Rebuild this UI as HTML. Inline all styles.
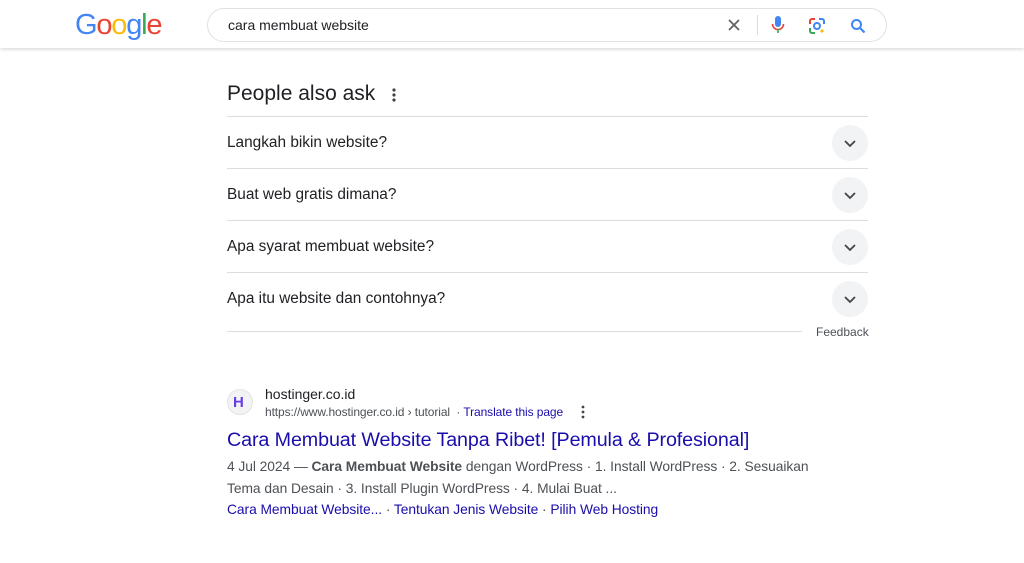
<!DOCTYPE html>
<html><head><style>
body{margin:0;width:1024px;height:563px;background:#fff;font-family:"Liberation Sans",Arial,sans-serif;position:relative;overflow:hidden}
.hdr{position:absolute;left:0;top:0;width:1024px;height:48px;background:#fff;box-shadow:0 1px 4px rgba(0,0,0,.18)}
.logo{position:absolute;left:75px;top:9px;font-size:29px;letter-spacing:-1.2px;font-weight:normal}
.sb{position:absolute;left:207px;top:8px;width:678px;height:32px;border:1px solid #dfe1e5;border-radius:18px;background:#fff}
.sb .q{position:absolute;left:20px;top:8px;font-size:14px;color:#202124}
.a{position:absolute}
.paa{left:227px;top:82px;font-size:21px;color:#202124}
.row{position:absolute;left:227px;width:641px;height:52px;border-top:1px solid #dadce0}
.row span{position:absolute;left:0;top:17px;font-size:15.4px;color:#202124}
.row i{position:absolute;right:0;top:8px;width:36px;height:36px;border-radius:50%;background:#f1f3f4}
.row i svg{position:absolute;left:11px;top:11px}
</style></head><body>
<div class="hdr">
<div class="logo"><span style="color:#4285f4">G</span><span style="color:#ea4335">o</span><span style="color:#fbbc05">o</span><span style="color:#4285f4">g</span><span style="color:#34a853">l</span><span style="color:#ea4335">e</span></div>
<div class="sb"><span class="q">cara membuat website</span>
<svg class="a" style="left:519px;top:9px" width="14" height="14" viewBox="0 0 14 14"><path d="M2 2L12 12M12 2L2 12" stroke="#5f6368" stroke-width="1.8"/></svg>
<div class="a" style="left:549px;top:6px;width:1px;height:20px;background:#dadce0"></div>
<svg class="a" style="left:563px;top:7px" width="14" height="18" viewBox="0 0 14 18"><rect x="4" y="0" width="6" height="11" rx="3" fill="#4285f4"/><path d="M1.5 8a5.5 5.5 0 0 0 11 0" fill="none" stroke="#ea4335" stroke-width="1.6"/><rect x="6.2" y="13" width="1.6" height="4" fill="#34a853"/></svg>
<svg class="a" style="left:600px;top:8px" width="18" height="18" viewBox="0 0 18 18"><path d="M2 7V4a2 2 0 0 1 2-2h3" fill="none" stroke="#ea4335" stroke-width="2"/><path d="M11 2h3a2 2 0 0 1 2 2v3" fill="none" stroke="#4285f4" stroke-width="2"/><path d="M2 11v3a2 2 0 0 0 2 2h3" fill="none" stroke="#34a853" stroke-width="2"/><circle cx="9" cy="9" r="3" fill="none" stroke="#4285f4" stroke-width="2"/><circle cx="14" cy="14" r="1.6" fill="#fbbc05"/></svg>
<svg class="a" style="left:642px;top:9px" width="16" height="16" viewBox="0 0 16 16"><circle cx="6.5" cy="6.5" r="4.5" fill="none" stroke="#4285f4" stroke-width="2"/><path d="M10 10L14.5 14.5" stroke="#4285f4" stroke-width="2.2"/></svg>
</div></div>
<div class="a paa">People also ask</div>
<svg class="a" style="left:391px;top:87px" width="6" height="16"><circle cx="3" cy="3" r="1.6" fill="#444"/><circle cx="3" cy="8" r="1.6" fill="#444"/><circle cx="3" cy="13" r="1.6" fill="#444"/></svg>
<div class="row" style="top:116px"><span>Langkah bikin website?</span><i><svg width="14" height="14"><path d="M2 5l5 5 5-5" fill="none" stroke="#444" stroke-width="1.8"/></svg></i></div>
<div class="row" style="top:168px"><span>Buat web gratis dimana?</span><i><svg width="14" height="14"><path d="M2 5l5 5 5-5" fill="none" stroke="#444" stroke-width="1.8"/></svg></i></div>
<div class="row" style="top:220px"><span>Apa syarat membuat website?</span><i><svg width="14" height="14"><path d="M2 5l5 5 5-5" fill="none" stroke="#444" stroke-width="1.8"/></svg></i></div>
<div class="row" style="top:272px"><span>Apa itu website dan contohnya?</span><i><svg width="14" height="14"><path d="M2 5l5 5 5-5" fill="none" stroke="#444" stroke-width="1.8"/></svg></i></div>
<div class="a" style="left:227px;top:331px;width:575px;height:1px;background:#dadce0"></div>
<div class="a" style="left:816px;top:325px;font-size:12px;color:#4d5156">Feedback</div>
<div class="a" style="left:227px;top:389px;width:26px;height:26px;border-radius:50%;background:#f1f3f4;border:1px solid #e3e3e3;box-sizing:border-box"></div>
<div class="a" style="left:233px;top:394px;font-size:15px;font-weight:bold;color:#673de6">H</div>
<div class="a" style="left:265px;top:386px;font-size:14px;color:#202124">hostinger.co.id</div>
<div class="a" style="left:265px;top:405px;font-size:12px;color:#4d5156;letter-spacing:-0.1px">https://www.hostinger.co.id › tutorial &nbsp;· <span style="color:#1a0dab">Translate this page</span></div>
<svg class="a" style="left:580px;top:405px" width="6" height="14"><circle cx="3" cy="2" r="1.4" fill="#444"/><circle cx="3" cy="7" r="1.4" fill="#444"/><circle cx="3" cy="12" r="1.4" fill="#444"/></svg>
<div class="a" style="left:227px;top:429px;font-size:19.7px;letter-spacing:-0.1px;color:#1a0dab">Cara Membuat Website Tanpa Ribet! [Pemula &amp; Profesional]</div>
<div class="a" style="left:227px;top:456px;width:600px;font-size:13.8px;line-height:22px;color:#4d5156;letter-spacing:-0.05px">4 Jul 2024 — <b>Cara Membuat Website</b> dengan WordPress · 1. Install WordPress · 2. Sesuaikan Tema dan Desain · 3. Install Plugin WordPress · 4. Mulai Buat ...</div>
<div class="a" style="left:227px;top:502px;font-size:13.8px;letter-spacing:-0.05px;color:#1a0dab">Cara Membuat Website... <span style="color:#4d5156">·</span> Tentukan Jenis Website <span style="color:#4d5156">·</span> Pilih Web Hosting</div>
</body></html>
